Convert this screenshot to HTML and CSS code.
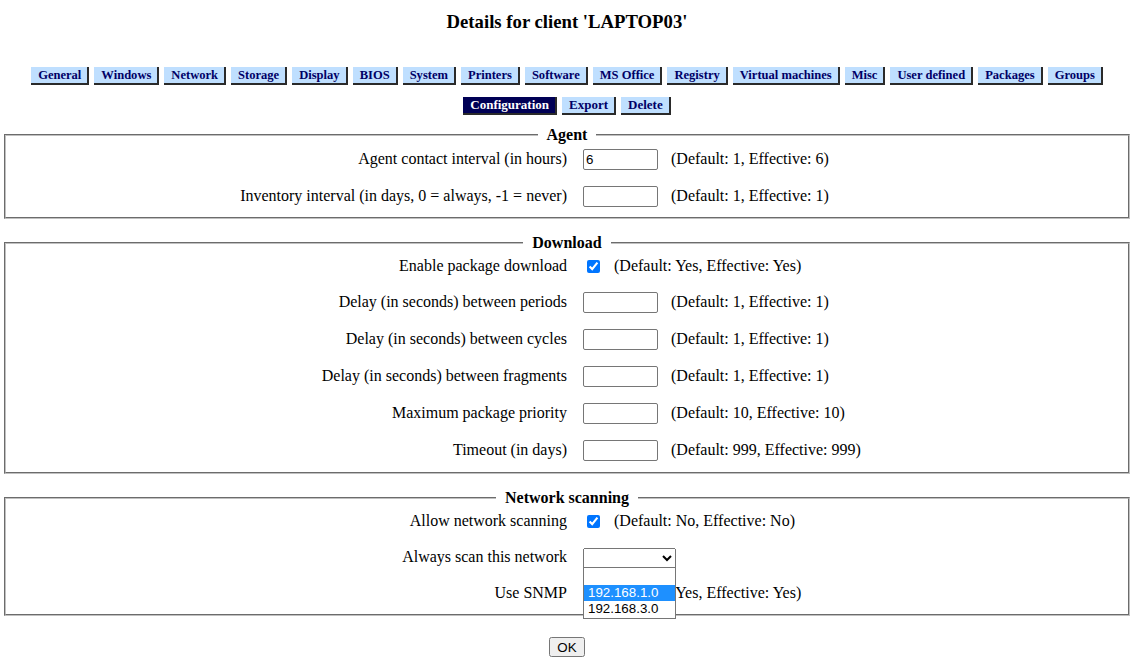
FILE: index.html
```html
<!DOCTYPE html>
<html lang="en">
<head>
<meta charset="utf-8">
<title>Details for client 'LAPTOP03'</title>
<link rel="stylesheet" href="styles.css">
</head>
<body>
<div class="page">
  <h3 class="title">Details for client 'LAPTOP03'</h3>

  <nav class="tabs">
    <div class="tab-row tab-row-main">
      <a class="tab" href="#">General</a>
      <a class="tab" href="#">Windows</a>
      <a class="tab" href="#">Network</a>
      <a class="tab" href="#">Storage</a>
      <a class="tab" href="#">Display</a>
      <a class="tab" href="#">BIOS</a>
      <a class="tab" href="#">System</a>
      <a class="tab" href="#">Printers</a>
      <a class="tab" href="#">Software</a>
      <a class="tab" href="#">MS Office</a>
      <a class="tab" href="#">Registry</a>
      <a class="tab" href="#">Virtual machines</a>
      <a class="tab" href="#">Misc</a>
      <a class="tab" href="#">User defined</a>
      <a class="tab" href="#">Packages</a>
      <a class="tab" href="#">Groups</a>
    </div>
    <div class="tab-row">
      <a class="tab tab-active" href="#">Configuration</a>
      <a class="tab" href="#">Export</a>
      <a class="tab" href="#">Delete</a>
    </div>
  </nav>

  <form class="config">
    <fieldset class="group">
      <legend class="group-title">Agent</legend>
      <div class="row row-input">
        <label class="label">Agent contact interval (in hours)</label>
        <div class="value"><input class="num" type="text" value="6"><span class="info">(Default: 1, Effective: 6)</span></div>
      </div>
      <div class="row row-input">
        <label class="label">Inventory interval (in days, 0 = always, -1 = never)</label>
        <div class="value"><input class="num" type="text" value=""><span class="info">(Default: 1, Effective: 1)</span></div>
      </div>
    </fieldset>

    <fieldset class="group group-tall">
      <legend class="group-title">Download</legend>
      <div class="row row-check">
        <label class="label">Enable package download</label>
        <div class="value"><input class="check" type="checkbox" checked><span class="info info-check">(Default: Yes, Effective: Yes)</span></div>
      </div>
      <div class="row row-input">
        <label class="label">Delay (in seconds) between periods</label>
        <div class="value"><input class="num" type="text" value=""><span class="info">(Default: 1, Effective: 1)</span></div>
      </div>
      <div class="row row-input">
        <label class="label">Delay (in seconds) between cycles</label>
        <div class="value"><input class="num" type="text" value=""><span class="info">(Default: 1, Effective: 1)</span></div>
      </div>
      <div class="row row-input">
        <label class="label">Delay (in seconds) between fragments</label>
        <div class="value"><input class="num" type="text" value=""><span class="info">(Default: 1, Effective: 1)</span></div>
      </div>
      <div class="row row-input">
        <label class="label">Maximum package priority</label>
        <div class="value"><input class="num" type="text" value=""><span class="info">(Default: 10, Effective: 10)</span></div>
      </div>
      <div class="row row-input">
        <label class="label">Timeout (in days)</label>
        <div class="value"><input class="num" type="text" value=""><span class="info">(Default: 999, Effective: 999)</span></div>
      </div>
    </fieldset>

    <fieldset class="group group-tall">
      <legend class="group-title">Network scanning</legend>
      <div class="row row-check">
        <label class="label">Allow network scanning</label>
        <div class="value"><input class="check" type="checkbox" checked><span class="info info-check">(Default: No, Effective: No)</span></div>
      </div>
      <div class="row row-select">
        <label class="label">Always scan this network</label>
        <div class="value">
          <span class="select-wrap">
            <select class="net">
              <option value=""></option>
              <option>192.168.1.0</option>
              <option>192.168.3.0</option>
            </select>
            <ul class="dropdown">
              <li class="option"></li>
              <li class="option option-hover">192.168.1.0</li>
              <li class="option">192.168.3.0</li>
            </ul>
          </span>
        </div>
      </div>
      <div class="row row-check">
        <label class="label">Use SNMP</label>
        <div class="value"><input class="check" type="checkbox" checked><span class="info info-check">(Default: Yes, Effective: Yes)</span></div>
      </div>
    </fieldset>

    <div class="actions"><button class="ok" type="button">OK</button></div>
  </form>
</div>
</body>
</html>
```

FILE: styles.css
```css
html, body {
  margin: 0;
  padding: 0;
  background: #ffffff;
}

body {
  font-family: "Liberation Serif", "Times New Roman", serif;
  font-size: 16px;
  color: #000000;
}

.page {
  padding: 0 8px 0 4px;
}

.title {
  margin: 0;
  padding-top: 11px;
  font-size: 18.72px;
  line-height: 22px;
  font-weight: bold;
  text-align: center;
}

.tabs {
  margin-top: 34px;
}

.tab-row {
  display: flex;
  justify-content: center;
  gap: 5px;
  margin-bottom: 11px;
}

.tab-row-main {
  margin-bottom: 12px;
}

.tab {
  display: block;
  font-size: 13px;
  font-weight: bold;
  line-height: 16px;
  padding: 0 6px 0 7px;
  background: #bfdfff;
  color: #000066;
  text-decoration: none;
  border-right: 2px solid #2a2a2a;
  border-bottom: 2px solid #2a2a2a;
}

.tab-row-main .tab {
  font-size: 12.55px;
}

.tab-active {
  background: #000055;
  color: #ffffff;
}

.config {
  margin: 0;
}

.group {
  margin: 0 0 15px 0;
  padding: 0 10px 6px;
  border: 2px groove #c0c0c0;
  min-width: 0;
}

.group-tall {
  padding-bottom: 7px;
}

.group-title {
  margin: 0 auto;
  padding: 0 9px;
  font-weight: bold;
  line-height: 18px;
}

.row {
  display: grid;
  grid-template-columns: 1fr 1fr;
  align-items: center;
  margin-bottom: 7px;
}

.row:last-child {
  margin-bottom: 0;
}

.row-input {
  height: 30px;
}

.row-check {
  height: 28px;
}

.row-select {
  height: 30px;
}

.label {
  text-align: right;
  padding-right: 0;
}

.value {
  display: flex;
  align-items: center;
  padding-left: 16px;
}

.num {
  box-sizing: border-box;
  width: 75px;
  height: 21px;
  margin: 0;
  padding: 1px 2px;
  font-family: "Liberation Sans", Arial, sans-serif;
  font-size: 13.33px;
  border: 1px solid #767676;
  border-radius: 2px;
}

.check {
  width: 13px;
  height: 13px;
  margin: 3px 3px 3px 4px;
}

.info {
  margin-left: 13px;
}

.info-check {
  margin-left: 11px;
}

.select-wrap {
  position: relative;
  display: inline-block;
  top: 1px;
}

.net {
  display: block;
  width: 93px;
  height: 20px;
  margin: 0;
  font-family: "Liberation Sans", Arial, sans-serif;
  font-size: 13.33px;
}

.dropdown {
  position: absolute;
  top: 19px;
  left: 0;
  z-index: 2;
  box-sizing: border-box;
  width: 93px;
  margin: 0;
  padding: 0 0 1px;
  list-style: none;
  background: #ffffff;
  border: 1px solid #767676;
  font-family: "Liberation Sans", Arial, sans-serif;
  font-size: 13.33px;
  line-height: 16px;
}

.option {
  height: 16px;
  padding: 0 4px;
  color: #000000;
}

.option:first-child {
  height: 17px;
}

.option-hover {
  background: #1e90ff;
  color: #ffffff;
}

.actions {
  display: flex;
  justify-content: center;
  margin-top: 21px;
}

.ok {
  font-family: "Liberation Sans", Arial, sans-serif;
  font-size: 13.33px;
  height: 20px;
  padding: 0 6px;
}
```
